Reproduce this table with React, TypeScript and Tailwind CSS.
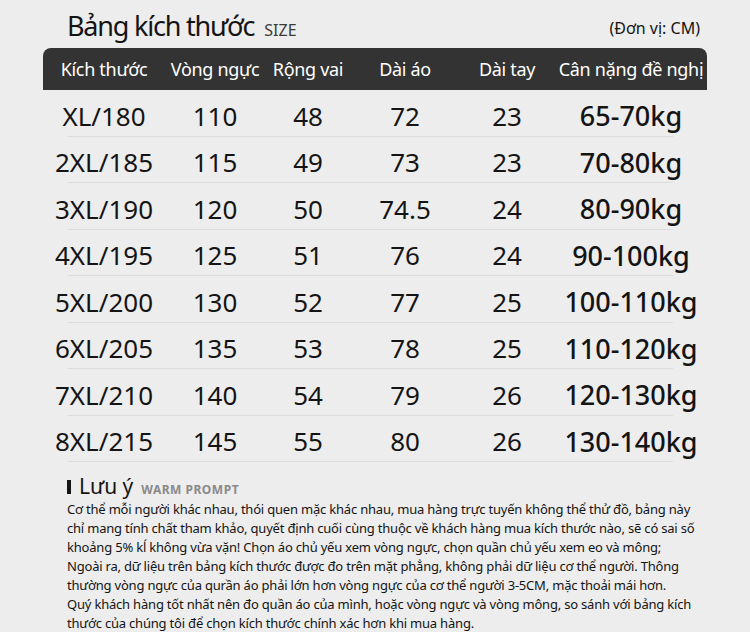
const headers = ["Kích thước", "Vòng ngực", "Rộng vai", "Dài áo", "Dài tay", "Cân nặng đề nghị"];

const rows: string[][] = [
    ["XL/180", "110", "48", "72", "23", "65-70kg"],
    ["2XL/185", "115", "49", "73", "23", "70-80kg"],
    ["3XL/190", "120", "50", "74.5", "24", "80-90kg"],
    ["4XL/195", "125", "51", "76", "24", "90-100kg"],
    ["5XL/200", "130", "52", "77", "25", "100-110kg"],
    ["6XL/205", "135", "53", "78", "25", "110-120kg"],
    ["7XL/210", "140", "54", "79", "26", "120-130kg"],
    ["8XL/215", "145", "55", "80", "26", "130-140kg"],
];

const notes = [
    "Cơ thể mỗi người khác nhau, thói quen mặc khác nhau, mua hàng trực tuyến không thể thử đồ, bảng này",
    "chỉ mang tính chất tham khảo, quyết định cuối cùng thuộc về khách hàng mua kích thước nào, sẽ có sai số",
    "khoảng 5% kĺ không vừa vặn! Chọn áo chủ yếu xem vòng ngực, chọn quần chủ yếu xem eo và mông;",
    "Ngoài ra, dữ liệu trên bảng kích thước được đo trên mặt phẳng, không phải dữ liệu cơ thể người. Thông",
    "thường vòng ngực của qurần áo phải lớn hơn vòng ngực của cơ thể người 3-5CM, mặc thoải mái hơn.",
    "Quý khách hàng tốt nhất nên đo quần áo của mình, hoặc vòng ngực và vòng mông, so sánh với bảng kích",
    "thước của chúng tôi để chọn kích thước chính xác hơn khi mua hàng.",
];

// column widths tuned so the centers line up with the picture
const cols = "grid grid-cols-[122px_100px_86px_108px_96px_152px]";

export default function App() {
    return (
        <div className="w-[750px] h-[632px] overflow-hidden bg-[#ededed] text-[#141414] font-['Noto_Sans',sans-serif]">
            <div className="flex items-end justify-between h-[48px] pl-[67px] pr-[50px] pb-[9px]">
                <div className="flex items-baseline gap-[10px]">
                    <span className="text-[27px] leading-none tracking-[-1.2px]">Bảng kích thước</span>
                    <span className="text-[16px] leading-none text-[#3a3a3a]">SIZE</span>
                </div>
                <span className="text-[16px] leading-none mb-[3px]">(Đơn vị: CM)</span>
            </div>

            <div className="ml-[43px] w-[664px]">
                <div className={`${cols} h-[42px] items-center bg-[#333333] rounded-t-[8px] text-white text-[18px]`}>
                    {headers.map((h, i) => (
                        <div key={i} className="text-center whitespace-nowrap tracking-[-0.3px]">{h}</div>
                    ))}
                </div>
                {rows.map((r, ri) => (
                    <div key={ri}>
                        <div className={`${cols} h-[45.5px] pt-[6px] items-center text-[26px]`}>
                            {r.map((c, ci) => (
                                <div
                                    key={ci}
                                    className={ci === 5 ? "text-center whitespace-nowrap text-[27px] font-medium" : "text-center whitespace-nowrap"}
                                >
                                    {c}
                                </div>
                            ))}
                        </div>
                        <div className="h-px ml-[25px] mr-[34px] bg-[#dcdcdc]" />
                    </div>
                ))}
            </div>

            <div className="pl-[67px] pt-[14px]">
                <div className="flex items-end gap-[8px]">
                    <span className="w-[4px] h-[14px] bg-[#141414] mb-[3px]" />
                    <span className="text-[21px] leading-none">Lưu ý</span>
                    <span className="text-[12px] font-bold tracking-[0.5px] text-[#8a8a8a] mb-[1px] leading-none">WARM PROMPT</span>
                </div>
                <div className="mt-[3px] text-[13px] leading-[19px] tracking-[-0.2px]">
                    {notes.map((n, i) => (
                        <div key={i} className="whitespace-nowrap">{n}</div>
                    ))}
                </div>
            </div>
        </div>
    );
}
